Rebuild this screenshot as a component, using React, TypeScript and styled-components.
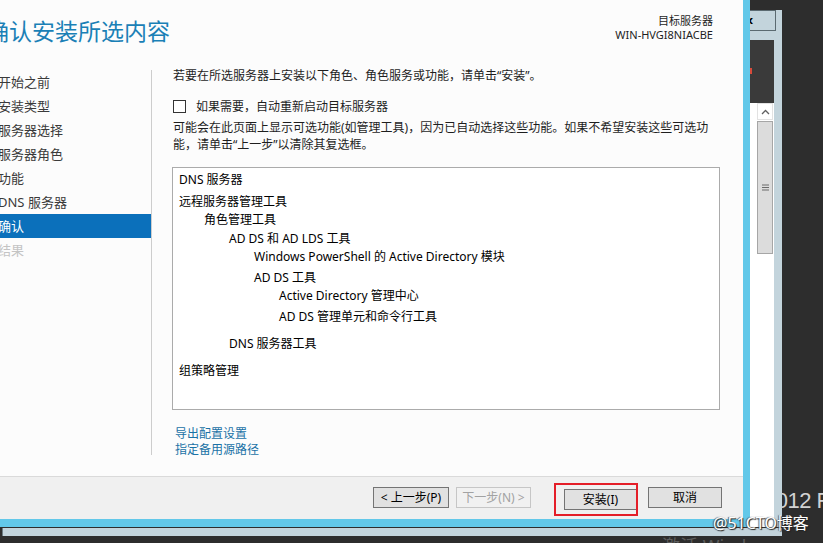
import React from 'react';
import styled, { createGlobalStyle } from 'styled-components';

const GlobalStyle = createGlobalStyle`
  html, body {
    margin: 0;
    padding: 0;
  }
  body {
    background: #2d2d2d;
    font-family: "Noto Sans", "Noto Sans CJK SC", sans-serif;
  }
`;

const Screen = styled.div`
  position: relative;
  width: 823px;
  height: 543px;
  overflow: hidden;
  background: #2d2d2d;
  display: flex;
  flex-direction: column;
`;

const Upper = styled.div`
  display: flex;
  height: 527px;
`;

const Wizard = styled.div`
  width: 743px;
  height: 519px;
  border-right: 7px solid #62c8e9;
  border-bottom: 8px solid #62c8e9;
  background: #fcfcfc;
  overflow: hidden;
  display: flex;
  flex-direction: column;
  position: relative;
  z-index: 1;
`;

const Header = styled.div`
  height: 64px;
  display: flex;
  justify-content: space-between;
  padding-right: 30px;
`;

const Title = styled.h1`
  margin: 20px 0 0 -14px;
  font-size: 23px;
  line-height: 23px;
  font-weight: normal;
  color: #1a80b6;
  white-space: nowrap;
`;

const ServerInfo = styled.div`
  margin-top: 14px;
  text-align: right;
  font-size: 11px;
  line-height: 13.5px;
  color: #1e1e1e;
`;

const Body = styled.div`
  display: flex;
  height: 412px;
`;

const Nav = styled.div`
  margin-left: -20px;
  width: 171px;
  padding-top: 6px;
`;

const NavItem = styled.div<{ $active?: boolean; $disabled?: boolean }>`
  height: 24px;
  line-height: 24px;
  padding-left: 18px;
  font-size: 13px;
  white-space: nowrap;
  background: ${p => (p.$active ? '#0b70bb' : 'transparent')};
  color: ${p => (p.$active ? '#ffffff' : p.$disabled ? '#c4c4c4' : '#3a3a3a')};
`;

const Separator = styled.div`
  width: 1px;
  background: #cdcdcd;
  margin: 6px 0 21px;
`;

const Content = styled.div`
  flex: 1;
  padding: 4px 0 0 21px;
  display: flex;
  flex-direction: column;
  font-size: 12px;
  color: #1e1e1e;
`;

const Text = styled.div`
  line-height: 16px;
  white-space: nowrap;
`;

const CheckRow = styled.label`
  display: flex;
  align-items: center;
  margin-top: 14px;
  height: 16px;
`;

const CheckBox = styled.span`
  width: 13px;
  height: 13px;
  box-sizing: border-box;
  border: 1px solid #333333;
  background: #ffffff;
  margin-right: 10px;
`;

const Note = styled.div`
  margin-top: 6px;
  line-height: 16.5px;
  white-space: nowrap;
`;

const TreeBox = styled.div`
  margin: 14px 0 0 -1px;
  width: 548px;
  height: 243px;
  box-sizing: border-box;
  border: 1px solid #ababab;
  background: #ffffff;
  padding-top: 3px;
`;

const TreeItem = styled.div<{ $level: number; $gap: number }>`
  line-height: 18px;
  padding-left: ${p => 6 + p.$level * 25}px;
  margin-top: ${p => p.$gap}px;
  color: #000000;
  white-space: nowrap;
`;

const Links = styled.div`
  margin-top: 16px;
  padding-left: 2px;
  display: flex;
  flex-direction: column;
`;

const Link = styled.a`
  line-height: 15.5px;
  color: #1a72a6;
  text-decoration: none;
  cursor: pointer;
`;

const Footer = styled.div`
  flex: 1;
  border-top: 1px solid #dadada;
  background: #f0f0f0;
  display: flex;
  justify-content: flex-end;
  align-items: flex-start;
  padding: 10px 21px 0 0;
`;

const Button = styled.button<{ $width: number; $gap?: number; $disabled?: boolean }>`
  width: ${p => p.$width}px;
  height: 21px;
  margin-left: ${p => p.$gap ?? 0}px;
  padding: 0;
  box-sizing: border-box;
  border: 1px solid ${p => (p.$disabled ? '#c6c6c6' : '#747474')};
  background: ${p => (p.$disabled ? '#f1f1f1' : '#e1e1e1')};
  color: ${p => (p.$disabled ? '#a2a2a2' : '#000000')};
  font-family: inherit;
  font-size: 12px;
  line-height: 19px;
  white-space: nowrap;
`;

const InstallWrap = styled.div`
  position: relative;
  margin-left: 33px;
`;

const RedMark = styled.div`
  position: absolute;
  left: -10px;
  top: -4px;
  width: 84px;
  height: 33px;
  box-sizing: border-box;
  border: 2px solid #e41e28;
  pointer-events: none;
`;

const SidePanel = styled.div`
  width: 32px;
  display: flex;
  flex-direction: column;
  position: relative;
  z-index: 1;
`;

const DarkGap = styled.div`
  height: 10px;
  background: #2d2d2d;
`;

const Frame = styled.div`
  flex: 1;
  background: #c3d4dc;
  display: flex;
  flex-direction: column;
`;

const CloseButton = styled.div`
  width: 26px;
  height: 21px;
  box-sizing: border-box;
  border: 1px solid #5b6a71;
  border-left: none;
  overflow: hidden;
  font-family: "DejaVu Sans", sans-serif;
  font-weight: bold;
  font-size: 11px;
  line-height: 19px;
  text-indent: -4px;
  color: #000;
`;

const DarkPane = styled.div`
  margin-top: 9px;
  width: 24px;
  height: 63px;
  background: #3a3a3a;
  position: relative;
`;

const RedDot = styled.div`
  position: absolute;
  left: 0;
  top: 28px;
  width: 2px;
  height: 6px;
  background: #d84a3a;
`;

const WhitePane = styled.div`
  flex: 1;
  width: 24px;
  background: #ffffff;
  padding-left: 7px;
  box-sizing: border-box;
`;

const ScrollUp = styled.div`
  width: 16px;
  height: 17px;
  box-sizing: border-box;
  border: 1px solid #e2e2e2;
  display: flex;
  align-items: center;
  justify-content: center;
`;

const Thumb = styled.div`
  margin-top: 1px;
  width: 16px;
  height: 133px;
  box-sizing: border-box;
  background: #dcdcdc;
  border: 1px solid #a6a6a6;
  display: flex;
  align-items: center;
  justify-content: center;
`;

const Desktop = styled.div`
  flex: 1;
  background: #2d2d2d;
`;

const Strip = styled.div`
  height: 16px;
  background: #2d2d2d;
  padding-top: 1px;
  box-sizing: border-box;
`;

const LightBar = styled.div`
  margin-left: 2px;
  width: 780px;
  height: 8px;
  box-sizing: border-box;
  background: #c3d4dc;
  border-left: 1px solid #6d7c83;
`;

const WallText = styled.div`
  position: absolute;
  left: 764px;
  top: 490px;
  font-family: "Liberation Sans", sans-serif;
  font-size: 22px;
  line-height: 22px;
  letter-spacing: -0.5px;
  color: #d2d2d2;
  white-space: nowrap;
`;

const ActivateText = styled.div`
  position: absolute;
  left: 662px;
  top: 536px;
  font-size: 18px;
  line-height: 20px;
  color: #5c5c5c;
  white-space: nowrap;
`;

const Watermark = styled.div`
  position: absolute;
  left: 713px;
  top: 514px;
  z-index: 3;
  font-size: 16px;
  line-height: 18px;
  color: #ffffff;
  text-shadow: 1px 1px 1px #222, -1px 0 1px #555;
  white-space: nowrap;
`;

const navItems = ['开始之前', '安装类型', '服务器选择', '服务器角色', '功能', 'DNS 服务器', '确认', '结果'];

const treeItems: { label: string; level: number; gap: number }[] = [
  { label: 'DNS 服务器', level: 0, gap: 0 },
  { label: '远程服务器管理工具', level: 0, gap: 4 },
  { label: '角色管理工具', level: 1, gap: 0 },
  { label: 'AD DS 和 AD LDS 工具', level: 2, gap: 1 },
  { label: 'Windows PowerShell 的 Active Directory 模块', level: 3, gap: 0 },
  { label: 'AD DS 工具', level: 3, gap: 3 },
  { label: 'Active Directory 管理中心', level: 4, gap: 0 },
  { label: 'AD DS 管理单元和命令行工具', level: 4, gap: 3 },
  { label: 'DNS 服务器工具', level: 2, gap: 9 },
  { label: '组策略管理', level: 0, gap: 9 },
];

export default function App() {
  return (
    <Screen>
      <GlobalStyle />
      <Upper>
        <Wizard>
          <Header>
            <Title>确认安装所选内容</Title>
            <ServerInfo>
              <div>目标服务器</div>
              <div>WIN-HVGI8NIACBE</div>
            </ServerInfo>
          </Header>
          <Body>
            <Nav>
              {navItems.map(item => (
                <NavItem key={item} $active={item === '确认'} $disabled={item === '结果'}>
                  {item}
                </NavItem>
              ))}
            </Nav>
            <Separator />
            <Content>
              <Text>若要在所选服务器上安装以下角色、角色服务或功能，请单击“安装”。</Text>
              <CheckRow>
                <CheckBox />
                如果需要，自动重新启动目标服务器
              </CheckRow>
              <Note>
                可能会在此页面上显示可选功能(如管理工具)，因为已自动选择这些功能。如果不希望安装这些可选功
                <br />
                能，请单击“上一步”以清除其复选框。
              </Note>
              <TreeBox>
                {treeItems.map(t => (
                  <TreeItem key={t.label} $level={t.level} $gap={t.gap}>
                    {t.label}
                  </TreeItem>
                ))}
              </TreeBox>
              <Links>
                <Link>导出配置设置</Link>
                <Link>指定备用源路径</Link>
              </Links>
            </Content>
          </Body>
          <Footer>
            <Button $width={76}>&lt; 上一步(P)</Button>
            <Button $width={75} $gap={7} $disabled>
              下一步(N) &gt;
            </Button>
            <InstallWrap>
              <Button $width={73}>安装(I)</Button>
              <RedMark />
            </InstallWrap>
            <Button $width={74} $gap={11}>
              取消
            </Button>
          </Footer>
        </Wizard>
        <SidePanel>
          <DarkGap />
          <Frame>
            <CloseButton>x</CloseButton>
            <DarkPane>
              <RedDot />
            </DarkPane>
            <WhitePane>
              <ScrollUp>
                <svg width="9" height="6" viewBox="0 0 9 6">
                  <path d="M1 5 L4.5 1.5 L8 5" fill="none" stroke="#606060" strokeWidth="1.3" />
                </svg>
              </ScrollUp>
              <Thumb>
                <svg width="7" height="7" viewBox="0 0 7 7">
                  <path d="M0 1 H7 M0 3.5 H7 M0 6 H7" stroke="#6a6a6a" strokeWidth="1.2" />
                </svg>
              </Thumb>
            </WhitePane>
          </Frame>
        </SidePanel>
        <Desktop />
      </Upper>
      <Strip>
        <LightBar />
      </Strip>
      <WallText>2012 R</WallText>
      <ActivateText>激活 Windows</ActivateText>
      <Watermark>@51CTO博客</Watermark>
    </Screen>
  );
}
